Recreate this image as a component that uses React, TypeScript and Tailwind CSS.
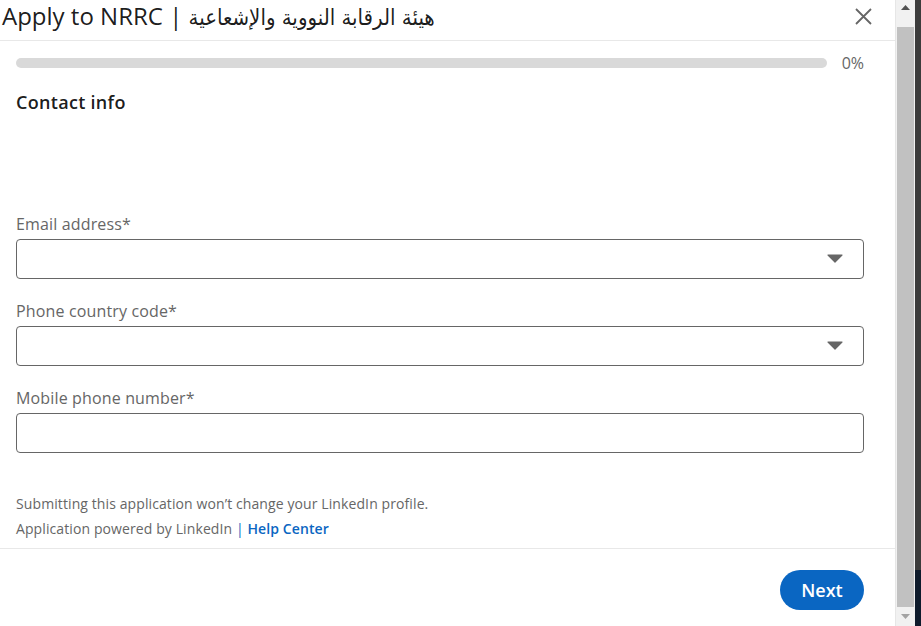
import { useState } from "react";

const FONT = "font-['Open_Sans','DejaVu_Sans',sans-serif]";

type Field = {
  id: string;
  label: string;
  select?: boolean;
};

const fields: Field[] = [
  { id: "email", label: "Email address*", select: true },
  { id: "country", label: "Phone country code*", select: true },
  { id: "phone", label: "Mobile phone number*" },
];

function Caret() {
  return (
    <svg width="16" height="9" viewBox="0 0 16 9" aria-hidden="true">
      <path d="M1 0.5h14a0.6 0.6 0 0 1 0.45 1L8.45 8.4a0.6 0.6 0 0 1-0.9 0L0.55 1.5A0.6 0.6 0 0 1 1 0.5z" fill="#666" />
    </svg>
  );
}

function FormField({ field }: { field: Field }) {
  const [value, setValue] = useState("");
  return (
    <div className="flex flex-col">
      <label htmlFor={field.id} className="text-[16px] leading-[24px] tracking-[0.15px] text-[#666]">
        {field.label}
      </label>
      <div className="relative mt-[3px] h-[40px] rounded-[4px] border border-[#666] bg-white">
        <input
          id={field.id}
          value={value}
          onChange={(e) => setValue(e.target.value)}
          className="h-full w-full rounded-[4px] bg-transparent px-3 text-[16px] outline-none"
        />
        {field.select && (
          <span className="pointer-events-none absolute right-[20px] top-[14px] flex">
            <Caret />
          </span>
        )}
      </div>
    </div>
  );
}

function Scrollbar() {
  return (
    <div className="flex w-[20px] flex-col border-l border-[#e6e6e6] bg-[#f1f1f1]">
      <div className="flex h-[27px] items-start justify-center pt-[5px]">
        <svg width="9" height="5" viewBox="0 0 9 5" aria-hidden="true">
          <path d="M4.5 0L9 5H0z" fill="#505050" />
        </svg>
      </div>
      <div className="mx-auto w-[17px] flex-1 bg-[#c1c1c1]" />
      <div className="flex h-[19px] items-center justify-center">
        <svg width="9" height="5" viewBox="0 0 9 5" aria-hidden="true">
          <path d="M0 0h9L4.5 5z" fill="#a3a3a3" />
        </svg>
      </div>
    </div>
  );
}

export default function App() {
  return (
    <div className={`flex h-[626px] w-[921px] overflow-hidden bg-white ${FONT}`}>
      <div className="flex w-[895px] flex-col">
        {/* header */}
        <div className="flex h-[41px] items-start justify-between border-b border-[#e8e8e8] pl-[2px] pr-[23px]">
          <h2 className="text-[24px] leading-[32px] text-black/90">
            Apply to NRRC |{" "}
            <span className="font-['DejaVu_Sans_Condensed','DejaVu_Sans',sans-serif] text-[22px]">
              هيئة الرقابة النووية والإشعاعية
            </span>
          </h2>
          <button type="button" className="mt-[7px] flex h-[18px] w-[18px] items-center justify-center" aria-label="Dismiss">
            <svg width="17" height="17" viewBox="0 0 17 17" aria-hidden="true">
              <path d="M1 1l15 15M16 1L1 16" stroke="#666" strokeWidth="1.8" />
            </svg>
          </button>
        </div>

        {/* body */}
        <div className="flex flex-1 flex-col pl-4 pr-[31px]">
          <div className="mt-[10px] flex h-[24px] items-center gap-[15px]">
            <div className="h-[10px] flex-1 rounded-full bg-[#d9d9d9]" />
            <span className="text-[16px] leading-[24px] text-[#666]">0%</span>
          </div>

          <h3 className="mt-[15px] text-[18px] font-semibold leading-[24px] tracking-[0.3px] text-black/90">
            Contact info
          </h3>

          <div className="mt-[98px] flex flex-col gap-5">
            {fields.map((f) => (
              <FormField key={f.id} field={f} />
            ))}
          </div>

          <div className="mt-[38px] text-[14px] leading-[25px] tracking-[0.1px] text-[#666]">
            <p>Submitting this application won’t change your LinkedIn profile.</p>
            <p>
              Application powered by LinkedIn <span className="text-[#0a66c2]">|</span>{" "}
              <a href="#" className="font-semibold text-[#0a66c2]">
                Help Center
              </a>
            </p>
          </div>
        </div>

        {/* footer */}
        <div className="flex h-[78px] justify-end border-t border-[#e8e8e8] pr-[31px] pt-[21px]">
          <button
            type="button"
            className="h-[40px] w-[84px] rounded-full bg-[#0a66c2] text-[18px] font-semibold text-white"
          >
            Next
          </button>
        </div>
      </div>

      <Scrollbar />

      <div className="flex w-[6px] flex-col bg-[#3c3c3c]">
        <div className="flex-1" />
        <div className="h-[56px] bg-[#0e1b2c]" />
      </div>
    </div>
  );
}
